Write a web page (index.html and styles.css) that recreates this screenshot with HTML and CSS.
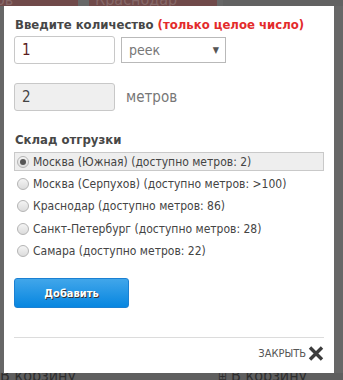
FILE: index.html
```html
<!DOCTYPE html>
<html lang="ru">
<head>
<meta charset="utf-8">
<link rel="stylesheet" href="styles.css">
</head>
<body>
<div class="bg-top">
  <div class="bg-block b1"><span>ов</span></div>
  <div class="bg-block b2"><span>Краснодар</span></div>
  <div class="bg-rest"></div>
</div>
<div class="modal">
  <div class="title">Введите количество <span class="warn">(только целое число)</span></div>
  <div class="row">
    <div class="field">1</div>
    <div class="select"><span>реек</span><span class="arrow">▼</span></div>
  </div>
  <div class="row row2">
    <div class="field disabled">2</div>
    <div class="unit">метров</div>
  </div>
  <div class="title stock">Склад отгрузки</div>
  <div class="options">
    <div class="opt active"><span class="radio checked"></span>Москва (Южная) (доступно метров: 2)</div>
    <div class="opt"><span class="radio"></span>Москва (Серпухов) (доступно метров: &gt;100)</div>
    <div class="opt"><span class="radio"></span>Краснодар (доступно метров: 86)</div>
    <div class="opt"><span class="radio"></span>Санкт-Петербург (доступно метров: 28)</div>
    <div class="opt"><span class="radio"></span>Самара (доступно метров: 22)</div>
  </div>
  <button class="btn">Добавить</button>
  <div class="sep"></div>
  <div class="close">ЗАКРЫТЬ<svg width="16" height="15" viewBox="0 0 16 15"><path d="M2 1.5 L14 13.5 M14 1.5 L2 13.5" stroke="#3c3c3c" stroke-width="3.4" stroke-linecap="butt"/></svg></div>
</div>
<div class="bg-bottom">
  <span class="link">В корзину</span>
  <span class="cart">⊞</span>
  <span class="link">В корзину</span>
</div>
</body>
</html>
```
FILE: styles.css
```css
html, body {
  margin: 0;
  padding: 0;
}
body {
  width: 343px;
  height: 380px;
  overflow: hidden;
  background: #676767;
  font-family: "DejaVu Sans Condensed", "DejaVu Sans", sans-serif;
}
.bg-top {
  display: flex;
  height: 6px;
  overflow: hidden;
}
.bg-block {
  background: #704a4a;
  color: #866868;
  font-size: 16px;
  line-height: 12px;
  margin-top: -6px;
  height: 12px;
}
.b1 { width: 78px; }
.b1 span { margin-left: -4px; }
.b2 { width: 122px; margin-left: 11px; padding-left: 6px; }
.bg-rest {
  flex: 1;
  margin-left: 6px;
  background: #626262;
}
.modal {
  margin-left: 4px;
  width: 330px;
  height: 367px;
  box-sizing: border-box;
  background: #fff;
  padding: 10px 10px 0 10px;
  color: #444;
}
.title {
  font-size: 13px;
  font-weight: bold;
  line-height: 18px;
  padding-left: 1px;
  color: #474747;
}
.warn { color: #e32b2b; }
.row {
  display: flex;
  align-items: center;
  margin-top: 2px;
}
.row2 { margin-top: 19px; }
.field {
  width: 101px;
  height: 28px;
  box-sizing: border-box;
  border: 1px solid #c8c8c8;
  border-radius: 3px;
  padding-left: 7px;
  font-size: 15px;
  line-height: 26px;
  color: #5a1c1c;
}
.field.disabled {
  background: #efefef;
  color: #444;
}
.select {
  margin-left: 6px;
  width: 105px;
  height: 26px;
  box-sizing: border-box;
  border: 1px solid #b9b9b9;
  display: flex;
  justify-content: space-between;
  align-items: center;
  padding: 0 6px 0 7px;
  font-size: 14px;
  color: #777;
}
.arrow {
  font-size: 9px;
  color: #555;
}
.unit {
  margin-left: 11px;
  font-size: 15px;
  color: #777;
}
.stock { margin-top: 20px; }
.options {
  margin-top: 3px;
  display: flex;
  flex-direction: column;
  gap: 2.5px;
}
.opt {
  height: 20px;
  box-sizing: border-box;
  display: flex;
  align-items: center;
  font-size: 12px;
  color: #444;
  border: 1px solid transparent;
  padding-left: 2px;
}
.opt.active {
  background: #eeeeee;
  border-color: #c9c9c9;
  height: 19px;
}
.radio {
  width: 12px;
  height: 12px;
  box-sizing: border-box;
  border-radius: 50%;
  border: 1px solid #b4b4b4;
  background: linear-gradient(#f4f4f4, #dcdcdc);
  margin-right: 4px;
  display: flex;
  align-items: center;
  justify-content: center;
}
.radio.checked::after {
  content: "";
  width: 6px;
  height: 6px;
  border-radius: 50%;
  background: #555;
}
.btn {
  display: block;
  margin-top: 17px;
  width: 115px;
  height: 30px;
  border: 1px solid #1b80d2;
  border-radius: 3px;
  background: linear-gradient(#41a6ea, #0786e0);
  color: #fff;
  font-family: inherit;
  font-size: 11px;
  font-weight: bold;
  text-shadow: 1px 1px 0 #333;
  padding: 0;
}
.sep {
  margin-top: 29px;
  height: 1px;
  background: #dcdcdc;
}
.close {
  margin-top: 8px;
  display: flex;
  justify-content: flex-end;
  align-items: center;
  font-size: 11px;
  color: #555;
  gap: 2px;
}
.bg-bottom {
  display: flex;
  height: 7px;
  overflow: hidden;
  background: #5f5f5f;
}
.link {
  color: #2e2e2e;
  font-size: 16px;
  line-height: 12px;
  margin-top: -3px;
  text-decoration: underline;
}
.cart {
  color: #2e2e2e;
  font-size: 12px;
  line-height: 12px;
  margin-top: -3px;
  margin-left: 142px;
  margin-right: 4px;
}
```
